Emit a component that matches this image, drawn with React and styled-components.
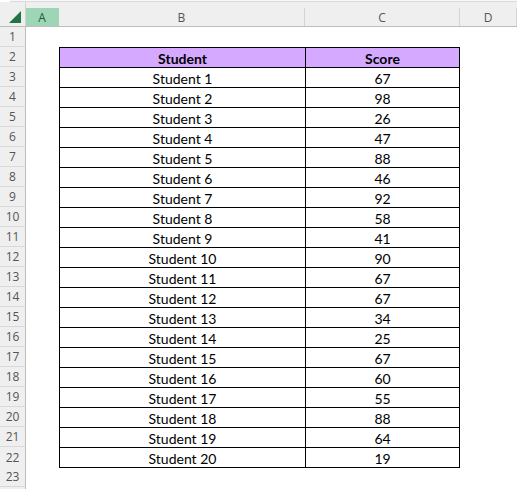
import styled, { createGlobalStyle } from "styled-components";

const scores = [67, 98, 26, 47, 88, 46, 92, 58, 41, 90, 67, 67, 34, 25, 67, 60, 55, 88, 64, 19];

const GlobalStyle = createGlobalStyle`
  html, body {
    margin: 0;
    padding: 0;
    background: #ffffff;
  }
  body {
    font-family: Lato, "Liberation Sans", sans-serif;
    overflow: hidden;
  }
`;

const COLS = "26px 33px 246px 155px 1fr";

const Sheet = styled.div`
  width: 517px;
  height: 489px;
  background: #fff;
  overflow: hidden;
`;

const TopStrip = styled.div`
  height: 1px;
  background: #f8f8f8;
  border-bottom: 1px solid #dcdcdc;
  margin-left: 10px;
`;

const HeaderRow = styled.div`
  display: grid;
  grid-template-columns: ${COLS};
  height: 25px;
  background: #efefef;
  border-bottom: 1px solid #bdbdbd;
  box-sizing: border-box;
`;

const Corner = styled.div`
  position: relative;
  border-right: 1px solid #d4d4d4;
  svg {
    position: absolute;
    right: 4px;
    bottom: 3px;
  }
`;

const ColHead = styled.div`
  display: flex;
  align-items: center;
  justify-content: center;
  margin-top: 6px;
  color: ${(p) => (p.$active ? "#1e5c3a" : "#555")};
  background: ${(p) => (p.$active ? "#9fd5b7" : "transparent")};
  border-right: 1px solid ${(p) => (p.$active ? "#9fd5b7" : "#d4d4d4")};
  font-family: "Open Sans", "Liberation Sans", sans-serif;
  font-size: 12px;
`;

const Row = styled.div`
  display: grid;
  grid-template-columns: ${COLS};
  height: 20px;
`;

const RowHead = styled.div`
  display: flex;
  align-items: center;
  justify-content: center;
  background: #efefef;
  border-right: 1px solid #bdbdbd;
  border-bottom: 1px solid #d9d9d9;
  box-sizing: border-box;
  font-family: "Open Sans", "Liberation Sans", sans-serif;
  font-size: 12px;
  color: #555;
`;

const Empty = styled.div``;

const Cell = styled.div`
  display: flex;
  align-items: center;
  justify-content: center;
  box-sizing: border-box;
  font-size: 14px;
  color: #000;
  padding-top: 1px;
  background: ${(p) => (p.$head ? "#d5a9ff" : "#fff")};
  font-weight: ${(p) => (p.$head ? 700 : 400)};
  border-top: 1px solid #000;
  border-left: 1px solid #000;
  border-right: ${(p) => (p.$last ? "1px solid #000" : "none")};
  border-bottom: ${(p) => (p.$bottom ? "1px solid #000" : "none")};
  height: ${(p) => (p.$bottom ? "21px" : "20px")};
`;

export default function App() {
  const rows = [];
  for (let i = 1; i <= 24; i++) {
    let b = null;
    let c = null;
    if (i === 2) {
      b = <Cell $head>Student</Cell>;
      c = <Cell $head $last>Score</Cell>;
    } else if (i >= 3 && i <= 22) {
      const bottom = i === 22;
      b = <Cell $bottom={bottom}>Student {i - 2}</Cell>;
      c = (
        <Cell $bottom={bottom} $last>
          {scores[i - 3]}
        </Cell>
      );
    }
    rows.push(
      <Row key={i}>
        {/* row 24 only peeks in by 2px, its label sits below the edge */}
        <RowHead>{i <= 23 ? i : ""}</RowHead>
        <Empty />
        {b || <Empty />}
        {c || <Empty />}
        <Empty />
      </Row>
    );
  }

  return (
    <>
      <GlobalStyle />
      <Sheet>
        <TopStrip />
        <HeaderRow>
          <Corner>
            <svg width="12" height="12" viewBox="0 0 12 12">
              <path d="M12 0 L12 12 L0 12 Z" fill="#217346" />
            </svg>
          </Corner>
          <ColHead $active>A</ColHead>
          <ColHead>B</ColHead>
          <ColHead>C</ColHead>
          <ColHead>D</ColHead>
        </HeaderRow>
        {rows}
      </Sheet>
    </>
  );
}
